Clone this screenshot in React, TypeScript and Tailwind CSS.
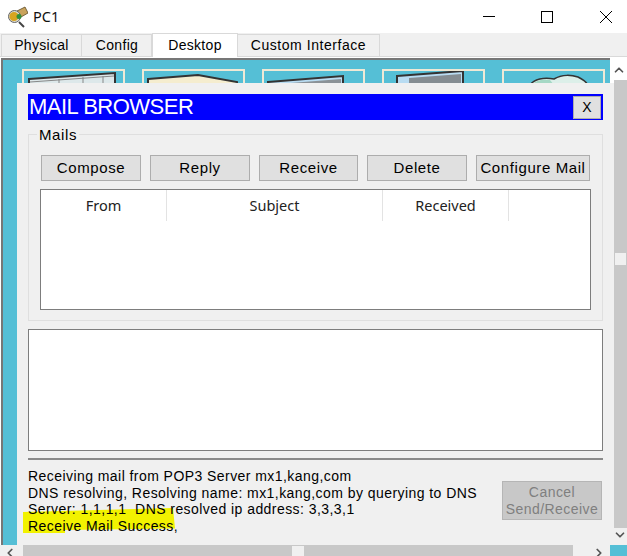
import { ChevronUp, ChevronDown, ChevronLeft, ChevronRight } from "lucide-react";

const btn =
  "h-[26px] bg-[#e0e0e0] border border-[#adadad] text-[15px] tracking-[0.6px] text-black flex items-center justify-center";
const tab = "flex items-center justify-center border border-b-0 border-[#d9d9d9]";

const DesktopIcon = ({ children }: { children: React.ReactNode }) => (
  <div className="w-[103px] h-[40px] shrink-0 border-2 border-b-0 border-[#efe9d6] overflow-hidden">
    <svg width="99" height="38" viewBox="0 0 99 38">
      {children}
    </svg>
  </div>
);

export default function App() {
  return (
    <div className="w-[627px] h-[556px] overflow-hidden flex flex-col bg-[#f0f0f0] font-['Liberation_Sans',sans-serif]">
      {/* title bar */}
      <div className="h-[33px] bg-white flex items-center shrink-0">
        <svg className="ml-[8px]" width="20" height="22" viewBox="0 0 20 22">
          <path d="M9 5 L17 1 L20 7 L13 11 Z" fill="#c9a35c" stroke="#5b4a26" strokeWidth="0.8" />
          <circle cx="6.5" cy="10.5" r="6" fill="#d9d9d0" stroke="#666" />
          <circle cx="6" cy="10.5" r="4.5" fill="#d9a520" />
          <circle cx="11" cy="10.5" r="2.5" fill="#2f8f3a" />
          <path d="M11 16 L16 21" stroke="#444" strokeWidth="2" />
        </svg>
        <span className="ml-[5px] text-[14.5px] text-[#111] font-['Noto_Sans',sans-serif]">PC1</span>
        <div className="ml-auto mr-[15px] flex items-center gap-[46px]">
          <svg width="12" height="12" viewBox="0 0 12 12" className="mt-[-1px]">
            <path d="M0 6.5 H12" stroke="#000" />
          </svg>
          <svg width="12" height="12" viewBox="0 0 12 12">
            <rect x="0.5" y="0.5" width="11" height="11" fill="none" stroke="#000" />
          </svg>
          <svg width="12" height="12" viewBox="0 0 12 12" className="ml-[1px]">
            <path d="M0 0 L12 12 M12 0 L0 12" stroke="#000" />
          </svg>
        </div>
      </div>

      {/* tabs */}
      <div className="h-[24px] flex items-end pl-[1px] shrink-0 border-b border-[#d9d9d9] text-[14px] tracking-[0.3px] text-black">
        <div className={`${tab} w-[81px] h-[22px]`}>Physical</div>
        <div className={`${tab} w-[70px] h-[22px] border-l-0 pl-[1px]`}>Config</div>
        <div className={`${tab} w-[86px] h-[24px] mb-[-1px] bg-white`}>Desktop</div>
        <div className={`${tab} w-[142px] h-[22px] border-l-0 tracking-[0.55px]`}>Custom Interface</div>
      </div>

      {/* desktop panel */}
      <div className="relative flex-1 flex min-h-0 bg-white">
        <div className="flex-1 min-w-0 flex flex-col">
          <div className="flex-1 min-h-0 border-l-2 border-t-[2.5px] border-[#777] ml-[1px] mt-[1px] bg-[#55bfd6] flex gap-[17px] pl-[19px] pt-[9px] overflow-hidden">
            <DesktopIcon>
              <path d="M5 8 L91 2 V20 H5 Z" fill="#dde8ea" stroke="#333" strokeWidth="2" />
              <path d="M6 11 L90 5 M35 8 V20 M59 6 V20 M79 5 V20" stroke="#888" />
            </DesktopIcon>
            <DesktopIcon>
              <path d="M4 8 L54 4 L93 11 V20 H4 Z" fill="#f5edcf" stroke="#333" strokeWidth="2" />
            </DesktopIcon>
            <DesktopIcon>
              <path d="M4 11 L79 5 V20 H4 Z" fill="#b9dcf2" stroke="#333" strokeWidth="2" />
              <path d="M14 13 L77 8 V20 H14 Z" fill="#8b9297" />
            </DesktopIcon>
            <DesktopIcon>
              <path d="M13 5 L79 0 V20 H13 Z" fill="#b9dcf2" stroke="#333" strokeWidth="2" />
              <path d="M25 7 L77 3 V20 H25 Z" fill="#858d92" />
            </DesktopIcon>
            <DesktopIcon>
              <path d="M26 14 C30 8 40 6 50 8 C58 3 68 4 74 6 C78 8 82 10 84 14 V20 H26 Z" fill="#dcefe9" stroke="#333" strokeWidth="1.5" />
              <path d="M27 14 C32 9 38 8 46 9 L50 14 Z" fill="#a5d8c5" />
            </DesktopIcon>
          </div>
          {/* horizontal scrollbar */}
          <div className="h-[11px] bg-[#f0f0f0] flex shrink-0 pl-[3px]">
            <ChevronLeft className="text-[#555] mt-[1px]" size={14} strokeWidth={3} />
            <div className="ml-[6px] w-[550px] bg-[#c8c8c8] relative">
              <div className="absolute left-[269px] top-[1px] w-[12px] h-[10px] bg-[#f0f0f0]" />
            </div>
            <ChevronRight className="ml-[19px] text-[#555] mt-[1px]" size={14} strokeWidth={3} />
          </div>
        </div>

        {/* vertical scrollbar */}
        <div className="w-[17px] shrink-0 flex flex-col bg-white">
          <div className="h-[23px] pt-[2px] flex items-center justify-center bg-white">
            <ChevronUp className="text-[#555]" size={14} strokeWidth={3} />
          </div>
          <div className="flex-1 bg-[#c8c8c8] ml-[4px] relative">
            <div className="absolute top-[173px] left-[1px] w-[11px] h-[12px] bg-[#f0f0f0]" />
          </div>
          <div className="h-[17px] flex items-start justify-center pl-[3px] bg-[#f0f0f0]">
            <ChevronDown className="text-[#555]" size={14} strokeWidth={3} />
          </div>
          <div className="h-[11px] bg-[#55bfd6]" />
        </div>

        {/* mail browser window */}
        <div className="absolute left-[17px] top-[26px] w-[597px] h-[462px] bg-[#f0f0f0] px-[11px] pt-[11px] flex flex-col">
          <div className="h-[26px] bg-[#0000ff] flex items-center justify-between pr-[2px] shrink-0">
            <span className="text-white text-[22px] leading-none pl-[1px] tracking-[-0.5px]">MAIL BROWSER</span>
            <div className="w-[28px] h-[23px] bg-[#e0e0e0] border border-[#adadad] flex items-center justify-center text-[14px] text-black">X</div>
          </div>

          <div className="relative mt-[14px] h-[187px] border border-[#dfdfdf] shrink-0">
            <span className="absolute left-[8px] top-[-8px] bg-[#f0f0f0] px-[2px] text-[15px] leading-[16px] tracking-[0.6px] text-black">Mails</span>
            <div className="flex pl-[12px] pt-[20px] gap-[9px]">
              <div className={`${btn} w-[100px]`}>Compose</div>
              <div className={`${btn} w-[100px]`}>Reply</div>
              <div className={`${btn} w-[99px]`}>Receive</div>
              <div className={`${btn} w-[100px]`}>Delete</div>
              <div className={`${btn} w-[114px]`}>Configure Mail</div>
            </div>
            <div className="ml-[11px] mt-[8px] w-[551px] h-[121px] bg-white border border-[#7d7d7d]">
              <div className="flex h-[31px] text-[14.5px] text-[#222] font-['Noto_Sans',sans-serif]">
                <div className="w-[126px] border-r border-[#e3e3e3] flex items-center justify-center">From</div>
                <div className="w-[216px] border-r border-[#e3e3e3] flex items-center justify-center">Subject</div>
                <div className="w-[126px] border-r border-[#e3e3e3] flex items-center justify-center">Received</div>
              </div>
            </div>
          </div>

          <div className="mt-[8px] w-[575px] h-[122px] bg-white border border-[#7d7d7d] shrink-0" />

          <div className="mt-[7px] h-[2px] bg-[#8a8a8a] w-[575px] shrink-0" />

          <div className="flex mt-[8px] w-[575px]">
            <div className="relative w-[460px] text-[14px] leading-[16.7px] tracking-[0.44px] whitespace-nowrap text-black">
              <svg className="absolute left-[-5px] top-[39px]" width="153" height="26" viewBox="0 0 153 26">
                <path d="M0 5 L150 1 L152 21.5 L42 23 V26 H0 Z" fill="#f2f200" />
              </svg>
              <div className="relative">
                <p>Receiving mail from POP3 Server mx1,kang,com</p>
                <p>DNS resolving, Resolving name: mx1,kang,com by querying to DNS</p>
                <p>Server: 1,1,1,1&nbsp;&nbsp;DNS resolved ip address: 3,3,3,1</p>
                <p>Receive Mail Success,</p>
              </div>
            </div>
            <div className="ml-auto mr-[1px] mt-[13px] w-[100px] h-[39px] bg-[#c8c8c8] border border-[#b5b5b5] flex flex-col items-center justify-center text-[14px] leading-[17px] tracking-[0.45px] text-[#7f7f7f]">
              <span>Cancel</span>
              <span>Send/Receive</span>
            </div>
          </div>
        </div>
      </div>
    </div>
  );
}
